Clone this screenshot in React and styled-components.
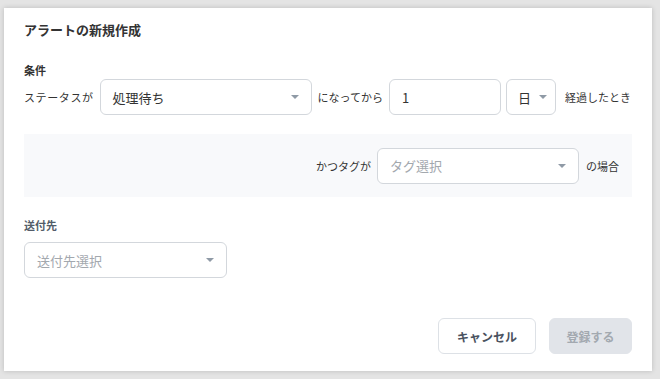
import React from 'react';
import styled, { createGlobalStyle } from 'styled-components';

const GlobalStyle = createGlobalStyle`
  html, body {
    margin: 0;
    padding: 0;
    background: #e4e4e4;
    font-family: "Noto Sans CJK JP", "Noto Sans", sans-serif;
    color: #333;
  }
  * { box-sizing: border-box; }
`;

const Page = styled.div`
  padding: 8px 8px 8px 4px;
`;

const Card = styled.div`
  width: 648px;
  height: 363px;
  background: #fff;
  box-shadow: 0 0 5px rgba(0, 0, 0, 0.18);
  padding: 12px 20px 17px;
  display: flex;
  flex-direction: column;
`;

const Title = styled.div`
  font-size: 13px;
  font-weight: 700;
  line-height: 20px;
  color: #333;
`;

const Label = styled.div`
  font-size: 11px;
  font-weight: 700;
  line-height: 16px;
  color: ${p => p.muted ? '#525c68' : '#333'};
  margin-top: ${p => p.top}px;
`;

const Row = styled.div`
  display: flex;
  align-items: center;
  height: 36px;
  margin-top: 1px;
`;

const Text = styled.span`
  font-size: 11px;
  line-height: 16px;
  color: #333;
  white-space: nowrap;
  letter-spacing: ${p => p.spread ?? 0}px;
  margin: 0 ${p => p.right ?? 6}px 0 ${p => p.left ?? 6}px;
`;

const Box = styled.div`
  width: ${p => p.w}px;
  height: 36px;
  border: 1px solid #d3d7dc;
  border-radius: 6px;
  background: #fff;
  display: flex;
  align-items: center;
  padding: 0 ${p => p.pr ?? 12}px 0 ${p => p.pl ?? 12}px;
  margin-left: ${p => p.ml ?? 0}px;
  gap: 8px;
  flex-shrink: 0;
`;

const Value = styled.span`
  flex: 1;
  font-size: 13px;
  color: ${p => p.placeholder ? '#a3a8ae' : '#333'};
  white-space: nowrap;
`;

const Caret = styled.span`
  width: 0;
  height: 0;
  border-left: 4px solid transparent;
  border-right: 4px solid transparent;
  border-top: 4px solid #8f9aa6;
`;

const TagPanel = styled.div`
  margin-top: 19px;
  height: 63px;
  background: #f8f9fb;
  display: flex;
  align-items: center;
  justify-content: flex-end;
  padding-right: 13px;
`;

const Footer = styled.div`
  margin-top: auto;
  display: flex;
  justify-content: flex-end;
  gap: 13px;
`;

const Button = styled.button`
  height: 36px;
  width: ${p => p.w}px;
  border-radius: 6px;
  font-family: inherit;
  font-size: 12px;
  font-weight: 700;
  border: 1px solid ${p => p.primary ? '#e1e4e9' : '#dde1e6'};
  background: ${p => p.primary ? '#e1e4e9' : '#fff'};
  color: ${p => p.primary ? '#a3a9b0' : '#4a5260'};
  padding: 0;
`;

function Select({ w, value, placeholder, pl, pr }) {
  return (
    <Box w={w} pl={pl} pr={pr}>
      <Value placeholder={placeholder ? 1 : undefined}>{value || placeholder}</Value>
      <Caret />
    </Box>
  );
}

export default function App() {
  return (
    <>
      <GlobalStyle />
      <Page>
        <Card>
          <Title>アラートの新規作成</Title>
          <Label top={22}>条件</Label>
          <Row>
            <Text left={0} right={6} spread={0.6}>ステータスが</Text>
            <Select w={212} value="処理待ち" />
            <Text left={6} right={6}>になってから</Text>
            <Box w={112}>
              <Value>1</Value>
            </Box>
            <Box w={50} ml={5} pl={11} pr={10}>
              <Value>日</Value>
              <Caret />
            </Box>
            <Text left={9} right={0}>経過したとき</Text>
          </Row>
          <TagPanel>
            <Text>かつタグが</Text>
            <Select w={202} placeholder="タグ選択" />
            <Text left={7} right={0}>の場合</Text>
          </TagPanel>
          <Label top={20} muted>送付先</Label>
          <Row style={{ marginTop: 9 }}>
            <Select w={203} placeholder="送付先選択" />
          </Row>
          <Footer>
            <Button w={98}>キャンセル</Button>
            <Button w={83} primary>登録する</Button>
          </Footer>
        </Card>
      </Page>
    </>
  );
}
